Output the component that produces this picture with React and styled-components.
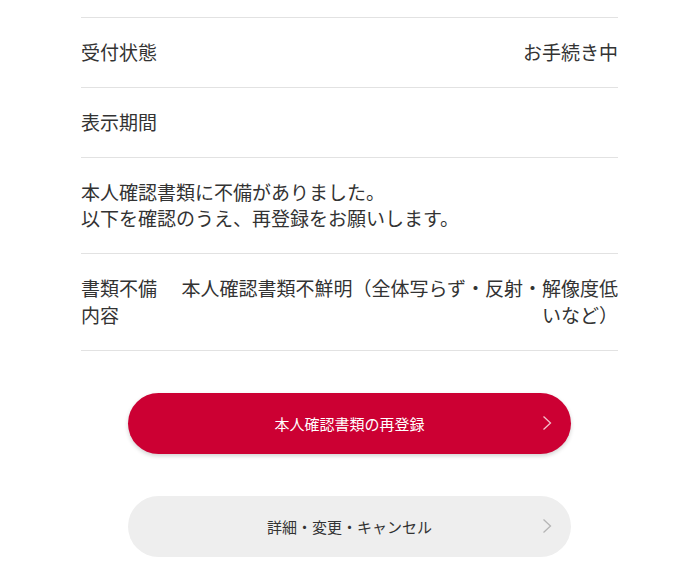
import React from "react";
import styled, { createGlobalStyle } from "styled-components";

const Global = createGlobalStyle`
  html, body { margin: 0; padding: 0; background: #fff; }
  body { font-family: "Noto Sans CJK JP", "Noto Sans", sans-serif; color: #333; }
`;

const Page = styled.div`
  width: 537px;
  padding: 17px 0 0 81px;
`;

const List = styled.dl`
  margin: 0;
  border-top: 1px solid #e2e2e2;
`;

const Row = styled.div`
  display: flex;
  align-items: flex-start;
  gap: 19px;
  padding: 21px 0;
  border-bottom: 1px solid #e2e2e2;
  font-size: 19px;
  line-height: 26.8px;
`;

const Label = styled.dt`
  flex: 0 0 ${(p) => (p.$narrow ? "80px" : "auto")};
  margin: 0;
`;

const Value = styled.dd`
  flex: 1;
  margin: 0;
  text-align: right;
`;

const Message = styled.p`
  margin: 0;
`;

const Buttons = styled.div`
  display: flex;
  flex-direction: column;
  align-items: center;
  gap: 42px;
  padding-top: 42px;
`;

const Button = styled.button`
  position: relative;
  width: 443px;
  height: 61px;
  border: none;
  border-radius: 31px;
  font-family: inherit;
  font-size: 15px;
  font-weight: 400;
  color: ${(p) => (p.$primary ? "#fff" : "#333")};
  background: ${(p) => (p.$primary ? "#cc0033" : "#eeeeee")};
  box-shadow: ${(p) => (p.$primary ? "0 2px 4px rgba(0,0,0,0.18)" : "none")};
  display: flex;
  align-items: center;
  justify-content: center;
  padding: 0;
`;

const Chevron = styled.svg`
  position: absolute;
  right: 19px;
  top: 50%;
  transform: translateY(-50%);
`;

const Arrow = ({ color }) => (
  <Chevron width="10" height="15" viewBox="0 0 10 15">
    <path d="M1.5 1 L8.5 7.5 L1.5 14" fill="none" stroke={color} strokeWidth="1.3" />
  </Chevron>
);

export default function App() {
  return (
    <>
      <Global />
      <Page>
        <List>
          <Row>
            <Label>受付状態</Label>
            <Value>お手続き中</Value>
          </Row>
          <Row>
            <Label>表示期間</Label>
            <Value></Value>
          </Row>
          <Row>
            <Message>
              本人確認書類に不備がありました。
              <br />
              以下を確認のうえ、再登録をお願いします。
            </Message>
          </Row>
          <Row>
            <Label $narrow>書類不備内容</Label>
            <Value>本人確認書類不鮮明（全体写らず・反射・解像度低いなど）</Value>
          </Row>
        </List>
        <Buttons>
          <Button $primary>
            本人確認書類の再登録
            <Arrow color="rgba(255,255,255,0.75)" />
          </Button>
          <Button>
            詳細・変更・キャンセル
            <Arrow color="#b5b5b5" />
          </Button>
        </Buttons>
      </Page>
    </>
  );
}
